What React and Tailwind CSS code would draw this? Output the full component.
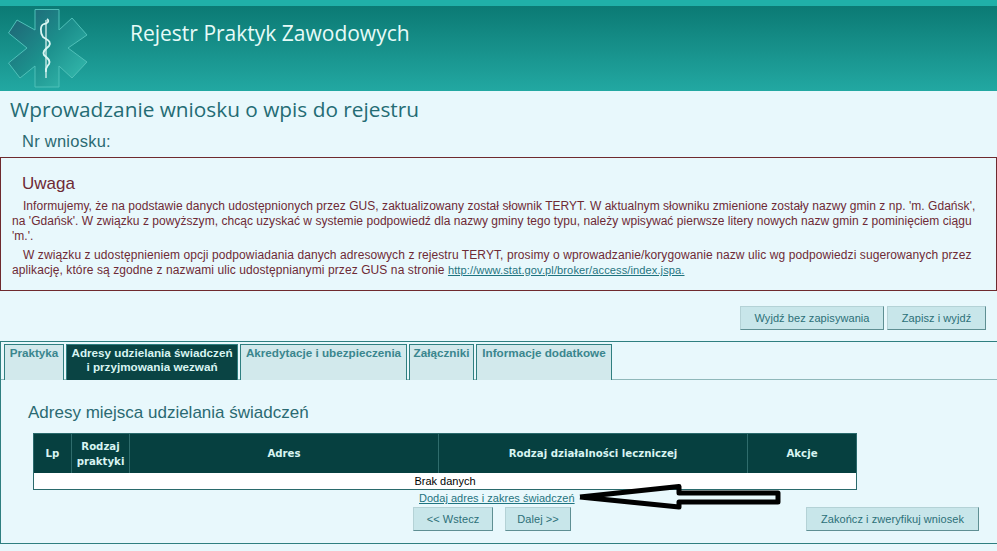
import React from 'react';

const arial = "font-['Liberation_Sans',Arial,sans-serif]";

const tabs = [
  { name: 'Praktyka', w: 'w-[60px]' },
  { name: <>Adresy udzielania świadczeń<br />i przyjmowania wezwań</>, w: 'w-[172px]', active: true },
  { name: 'Akredytacje i ubezpieczenia', w: 'w-[167px]' },
  { name: 'Załączniki', w: 'w-[65px]' },
  { name: 'Informacje dodatkowe', w: 'w-[136px]' },
];

const Logo = () => (
  <svg width="80" height="80" viewBox="8 9 80 80" className="shrink-0">
    <defs>
      <linearGradient id="star" x1="0" y1="0" x2="1" y2="1">
        <stop offset="0" stopColor="#1f5f72" />
        <stop offset="0.5" stopColor="#1c8f8c" />
        <stop offset="1" stopColor="#37c0b2" />
      </linearGradient>
    </defs>
    <path
      d="M35 9.5H59V30L72 18L87 35L68 48L87 62L72 78L59 66V87H35V66L20 78L8.5 63L27 48L8.5 33L17 20L35 30Z"
      fill="url(#star)"
      stroke="#4fc0b8"
      strokeWidth="1"
    />
    <path d="M46 20V78" stroke="#e4f8f5" strokeWidth="1.2" />
    <path
      d="M47 19C50 21 47 24 44 24C40 25 40 33 43 37C47 40 52 41 49 46C46 49 42 51 44 55C47 58 51 60 49 64C47 67 45 68 46 72"
      fill="none"
      stroke="#d8f6f3"
      strokeWidth="1.8"
    />
  </svg>
);

const Button = ({ children, className = '' }) => (
  <button className={`h-6 bg-[#c8e6ea] border border-[#b4d2d6] border-r-[#5f8f93] border-b-[#5f8f93] text-[11px] text-[#2c7078] tracking-[0.07px] ${className}`}>
    {children}
  </button>
);

const App = () => {
  return (
    <div className={`relative w-[997px] h-[551px] overflow-hidden bg-[#e8f8fc] ${arial}`}>
      <div className="h-[6px] bg-[#20b0a8]" />
      <header className="h-[85px] flex items-start bg-gradient-to-b from-[#0b7a74] to-[#22a8a2] pl-[8px] pt-[3px]">
        <Logo />
        <h2 className="ml-[42px] mt-[10px] text-[21px] leading-[28px] text-[#e6fbf8] font-['Open_Sans',sans-serif]">
          Rejestr Praktyk Zawodowych
        </h2>
      </header>

      <h1 className="mt-[5px] ml-[10px] text-[20.8px] leading-[26px] text-[#246c74] font-['Open_Sans',sans-serif]">
        Wprowadzanie wniosku o wpis do rejestru
      </h1>
      <div className="mt-[9px] ml-[22px] text-[16.5px] leading-[20px] text-[#2b6a72] tracking-[0.25px]">Nr wniosku:</div>

      <section className="mt-[6px] h-[134px] border border-[#6e2a2e] pt-[16px] pl-[11px] pr-[16px] text-[#6e2a35]">
        <h3 className="ml-[10px] text-[17px] leading-[20px]">Uwaga</h3>
        <p className="mt-[5px] text-[12px] leading-[15px] indent-[11px] tracking-[0.04px]">
          Informujemy, że na podstawie danych udostępnionych przez GUS, zaktualizowany został słownik TERYT. W aktualnym słowniku zmienione zostały nazwy gmin z np. 'm. Gdańsk', na 'Gdańsk'. W związku z powyższym, chcąc uzyskać w systemie podpowiedź dla nazwy gminy tego typu, należy wpisywać pierwsze litery nowych nazw gmin z pominięciem ciągu 'm.'.
        </p>
        <p className="mt-[4px] text-[12px] leading-[15px] indent-[11px] tracking-[0.09px]">
          W związku z udostępnieniem opcji podpowiadania danych adresowych z rejestru TERYT, prosimy o wprowadzanie/korygowanie nazw ulic wg podpowiedzi sugerowanych przez aplikację, które są zgodne z nazwami ulic udostępnianymi przez GUS na stronie{' '}
          <a className="text-[11.1px] text-[#1f7480] underline">http://www.stat.gov.pl/broker/access/index.jspa.</a>
        </p>
      </section>

      <div className="mt-[15px] flex justify-end gap-[3px] pr-[11px]">
        <Button className="w-[144px]">Wyjdź bez zapisywania</Button>
        <Button className="w-[99px]">Zapisz i wyjdź</Button>
      </div>

      <section className="mt-[11px] h-[203px] border border-[#2f7f80] border-r-0 pt-[2px]">
        <nav className="flex gap-[2px] pl-[3px] h-[36px] border-b border-[#8fb8ba] text-[11.7px] leading-[14px] font-bold">
          {tabs.map((tab, i) => (
            <div
              key={i}
              className={`${tab.w} h-[36px] text-center pt-[1px] border border-[#2f7f80] border-b-0 whitespace-nowrap ${tab.active ? 'bg-[#0a4444] text-[#d8f4f2]' : 'bg-[#d2e9ec] text-[#3a868e]'}`}
            >
              {tab.name}
            </div>
          ))}
        </nav>

        <h3 className="mt-[23px] ml-[27px] text-[17px] leading-[20px] text-[#2b6a72]">Adresy miejsca udzielania świadczeń</h3>

        <div className="mt-[10px] ml-[32px] w-[824px] border border-[#2a6a6c] bg-white">
          <div className="grid grid-cols-[38px_58px_309px_309px_1fr] h-[39px] bg-[#064040] text-[#d8f4f2] text-[10.2px] leading-[15px] font-bold font-['DejaVu_Sans',sans-serif] text-center">
            <div className="flex items-center justify-center border-r border-[#2f6c6c]">Lp</div>
            <div className="flex items-center justify-center border-r border-[#2f6c6c]">Rodzaj<br />praktyki</div>
            <div className="flex items-center justify-center border-r border-[#2f6c6c]">Adres</div>
            <div className="flex items-center justify-center border-r border-[#2f6c6c]">Rodzaj działalności leczniczej</div>
            <div className="flex items-center justify-center">Akcje</div>
          </div>
          <div className="h-[16px] text-center text-[11px] leading-[16px] text-black">Brak danych</div>
        </div>

        <div className="ml-[418px] text-[11px] leading-[16px] tracking-[0.03px] text-[#1f7480] underline">
          Dodaj adres i zakres świadczeń
        </div>

        <div className="relative mt-[1px] h-[24px]">
          <div className="flex justify-start gap-[12px] pl-[412px]">
            <Button className="w-[80px]">&lt;&lt; Wstecz</Button>
            <Button className="w-[66px]">Dalej &gt;&gt;</Button>
          </div>
          <Button className="absolute right-[18px] top-0 w-[173px]">Zakończ i zweryfikuj wniosek</Button>
        </div>
      </section>

      <svg className="absolute left-[575px] top-[480px]" width="210" height="34" viewBox="0 0 210 34">
        <path
          d="M5 17L104 6.5L104 13H203V22H104L104 27L5 17"
          fill="none"
          stroke="#000"
          strokeWidth="5"
          strokeLinejoin="round"
        />
      </svg>
    </div>
  );
};

export default App;
